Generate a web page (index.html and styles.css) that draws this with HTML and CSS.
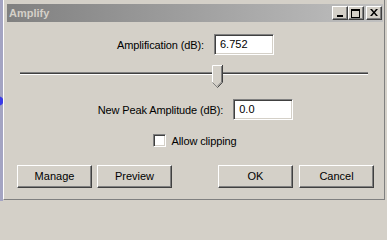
FILE: index.html
```html
<!DOCTYPE html>
<html>
<head>
<meta charset="utf-8">
<title>Amplify</title>
<link rel="stylesheet" href="styles.css">
</head>
<body>
<div class="desk">
  <div class="strip"></div>
  <div class="window">
    <div class="titlebar">
      <span class="title">Amplify</span>
      <div class="caps">
        <div class="cap"><span class="g-min"></span></div>
        <div class="cap"><span class="g-max"></span></div>
        <div class="cap cap-close">
          <svg width="8" height="7" viewBox="0 0 8 7"><path d="M0 0h2l2 2.5 2-2.5h2l-3 3.5 3 3.5h-2l-2-2.5-2 2.5h-2l3-3.5z" fill="#000"/></svg>
        </div>
      </div>
    </div>
    <div class="content">
      <div class="field-row">
        <label class="lbl">Amplification (dB):</label>
        <div class="input">6.752</div>
      </div>
      <div class="slider">
        <div class="track"></div>
        <svg class="thumb" width="11" height="23" viewBox="0 0 11 23">
          <polygon points="0,0 11,0 11,17 5.5,22.5 0,17" fill="#d4d0c8"/>
          <path d="M0.5 17.5V0.5H10" stroke="#fff" fill="none"/>
          <path d="M0.5 17.5L5.5 22.5" stroke="#808080" fill="none"/>
          <path d="M10.5 0V17.3L5.5 22.5" stroke="#404040" fill="none"/>
          <path d="M9.5 1V17L5.5 21" stroke="#808080" fill="none"/>
        </svg>
      </div>
      <div class="field-row row2">
        <label class="lbl">New Peak Amplitude (dB):</label>
        <div class="input">0.0</div>
      </div>
      <div class="check-row">
        <span class="checkbox"></span>
        <span class="lbl">Allow clipping</span>
      </div>
      <div class="buttons">
        <div class="btn-group left">
          <div class="btn">Manage</div>
          <div class="btn">Preview</div>
        </div>
        <div class="btn-group right">
          <div class="btn">OK</div>
          <div class="btn">Cancel</div>
        </div>
      </div>
    </div>
  </div>
</div>
</body>
</html>
```
FILE: styles.css
```css
html, body {
  margin: 0;
  padding: 0;
  background: #d4d0c8;
  font-family: "Liberation Sans", Arial, sans-serif;
  font-size: 11px;
  color: #000;
}
.desk {
  display: flex;
  width: 387px;
  height: 201px;
  overflow: hidden;
}
.strip {
  width: 3px;
  flex: none;
  background: radial-gradient(circle at -1px 101px, #3a3ae8 4px, transparent 5px), #a4a4c2;
}
.window {
  width: 382px;
  height: 200px;
  box-sizing: border-box;
  border-left: 1px solid #fff;
  border-right: 1px solid #808080;
  border-bottom: 1px solid #808080;
  background: #d4d0c8;
  padding-top: 4px;
  display: flex;
  flex-direction: column;
}
.titlebar {
  margin: 0 1px 0 3px;
  height: 18px;
  display: flex;
  align-items: center;
  justify-content: space-between;
  background: linear-gradient(to right, #808080, #c0c0c0);
}
.title {
  font-weight: bold;
  color: #d4d0c8;
  padding-left: 2px;
  font-size: 11px;
  line-height: 18px;
}
.caps {
  display: flex;
  padding-right: 1px;
}
.cap {
  width: 16px;
  height: 14px;
  box-sizing: border-box;
  background: #d4d0c8;
  border-top: 1px solid #fff;
  border-left: 1px solid #fff;
  border-right: 1px solid #404040;
  border-bottom: 1px solid #404040;
  box-shadow: inset -1px -1px 0 #808080;
  position: relative;
  display: flex;
}
.cap-close {
  margin-left: 2px;
  align-items: center;
  justify-content: center;
  padding: 0 1px 1px 0;
}
.g-min {
  width: 6px;
  height: 2px;
  background: #000;
  margin: 8px 0 0 4px;
}
.g-max {
  width: 9px;
  height: 9px;
  box-sizing: border-box;
  border: 1px solid #000;
  border-top-width: 2px;
  margin: 2px 0 0 2px;
}
.content {
  display: flex;
  flex-direction: column;
  padding-top: 12px;
}
.lbl {
  letter-spacing: -0.12px;
}
.field-row {
  display: flex;
  justify-content: center;
  align-items: center;
  gap: 10px;
  height: 21px;
  padding-left: 3px;
}
.row2 {
  margin-top: 11px;
}
.input {
  width: 60px;
  height: 21px;
  box-sizing: border-box;
  background: #fff;
  border-top: 1px solid #808080;
  border-left: 1px solid #808080;
  border-right: 1px solid #fff;
  border-bottom: 1px solid #fff;
  box-shadow: inset 1px 1px 0 #404040, inset -1px -1px 0 #d4d0c8;
  padding: 0 0 0 5px;
  line-height: 19px;
}
.slider {
  position: relative;
  margin: 10px 16px 0;
  height: 23px;
}
.track {
  margin-top: 7px;
  height: 1px;
  border-top: 1px solid #808080;
  border-bottom: 1px solid #fff;
  background: #404040;
}
.thumb {
  position: absolute;
  left: 192px;
  top: 0;
}
.check-row {
  display: flex;
  justify-content: center;
  align-items: center;
  gap: 6px;
  margin-top: 14px;
  height: 13px;
  padding-left: 1px;
}
.checkbox {
  width: 13px;
  height: 13px;
  box-sizing: border-box;
  background: #fff;
  border-top: 1px solid #808080;
  border-left: 1px solid #808080;
  border-right: 1px solid #fff;
  border-bottom: 1px solid #fff;
  box-shadow: inset 1px 1px 0 #404040, inset -1px -1px 0 #d4d0c8;
}
.buttons {
  display: flex;
  justify-content: space-between;
  margin-top: 18px;
  padding: 0 10px 0 13px;
}
.btn-group {
  display: flex;
}
.btn-group.left { gap: 5px; }
.btn-group.right { gap: 6px; }
.btn {
  width: 75px;
  height: 23px;
  box-sizing: border-box;
  background: #d4d0c8;
  border-top: 1px solid #fff;
  border-left: 1px solid #fff;
  border-right: 1px solid #404040;
  border-bottom: 1px solid #404040;
  box-shadow: inset -1px -1px 0 #808080;
  display: flex;
  align-items: center;
  justify-content: center;
  padding-bottom: 1px;
}
```
